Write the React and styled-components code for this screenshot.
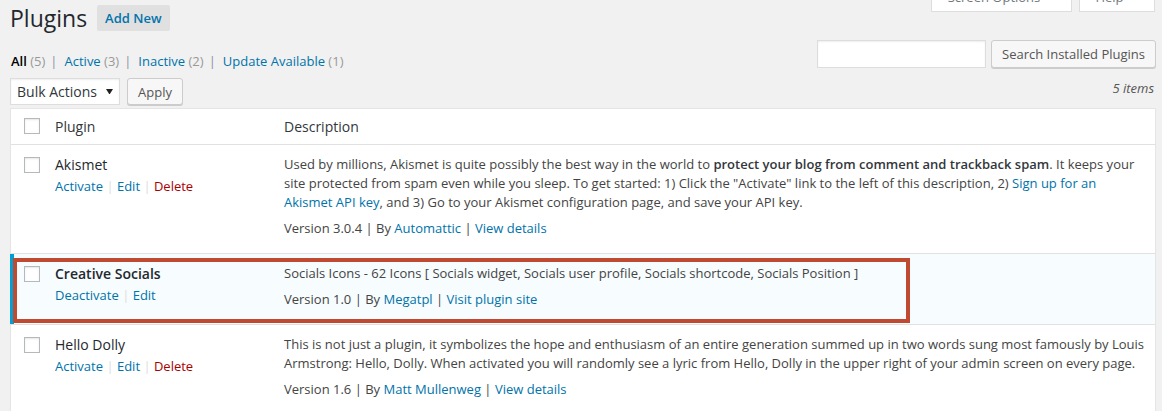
import styled, { createGlobalStyle } from 'styled-components';

const GlobalStyle = createGlobalStyle`
	html, body {
		margin: 0;
		padding: 0;
		background: #f1f1f1;
	}
	body {
		font-family: "Open Sans", "Liberation Sans", sans-serif;
		font-size: 13px;
		line-height: 19px;
		color: #444;
		overflow: hidden;
	}
	* {
		box-sizing: border-box;
	}
`;

const Wrap = styled.div`
	padding: 0 6px 0 10px;
`;

const TopBar = styled.div`
	display: flex;
	align-items: flex-start;
`;

const Title = styled.h1`
	margin: 4px 0 0;
	font-size: 23px;
	font-weight: 400;
	line-height: 29px;
	color: #23282d;
`;

const AddNew = styled.a`
	margin: 5px 0 0 10px;
	height: 26px;
	padding: 0 8px;
	display: inline-flex;
	align-items: center;
	background: #e0e0e0;
	border-radius: 2px;
	color: #0073aa;
	font-size: 13px;
	font-weight: 600;
	text-decoration: none;
`;

const MetaLinks = styled.div`
	margin: -16px 1px 0 auto;
	display: flex;
	gap: 7px;
`;

const MetaTab = styled.div`
	width: ${props => props.$width}px;
	height: 28px;
	background: #fff;
	border: 1px solid #ddd;
	border-top: 0;
	display: flex;
	align-items: center;
	justify-content: center;
	gap: 9px;
	color: #72777c;
	font-size: 13px;
`;

const SubRow = styled.div`
	display: flex;
	justify-content: space-between;
	align-items: flex-start;
	margin-top: 7px;
`;

const Filters = styled.ul`
	list-style: none;
	margin: 0;
	padding: 11px 0 0 1px;
	display: flex;
	font-size: 13px;
	line-height: 20px;
	color: #666;
	white-space: pre;
`;

const FilterLink = styled.a`
	color: ${props => (props.$current ? '#000' : '#0073aa')};
	font-weight: ${props => (props.$current ? 600 : 400)};
	text-decoration: none;
`;

const Count = styled.span`
	color: #999;
	font-weight: 400;
`;

const Sep = styled.span`
	margin: 0 7px 0 5px;
	color: ${props => props.$color || 'inherit'};
`;

const SearchBox = styled.div`
	display: flex;
	gap: 5px;
`;

const SearchInput = styled.input`
	width: 169px;
	height: 28px;
	margin: 0;
	border: 1px solid #ddd;
	background: #fff;
	box-shadow: inset 0 1px 2px rgba(0, 0, 0, 0.07);
	font-family: inherit;
`;

const Button = styled.button`
	height: ${props => props.$height || 28}px;
	margin: 0;
	padding: 0 10px;
	background: #f7f7f7;
	border: 1px solid #ccc;
	border-radius: 3px;
	box-shadow: 0 1px 0 #ccc;
	color: #555;
	font-family: inherit;
	font-size: 13px;
`;

const NavRow = styled.div`
	display: flex;
	align-items: flex-start;
	gap: 7px;
	margin-top: 7px;
`;

const SelectBox = styled.div`
	width: 110px;
	height: 27px;
	padding: 0 6px;
	display: flex;
	align-items: center;
	justify-content: space-between;
	background: #fff;
	border: 1px solid #ddd;
	box-shadow: inset 0 1px 2px rgba(0, 0, 0, 0.07);
	color: #32373c;
	font-size: 14px;
`;

const ItemCount = styled.span`
	margin: 0 2px 0 auto;
	line-height: 20px;
	font-style: italic;
	color: #555;
`;

const Table = styled.div`
	margin-top: 3px;
	background: #fff;
	border: 1px solid #e5e5e5;
	box-shadow: 0 1px 1px rgba(0, 0, 0, 0.04);
`;

const Row = styled.div`
	position: relative;
	display: grid;
	grid-template-columns: 34px 229px 1fr;
	border-top: ${props => (props.$head ? '0' : '1px solid #e1e1e1')};
	background: ${props => (props.$active ? '#f7fcfe' : '#fff')};

	${props =>
		props.$active &&
		`
		&::before {
			content: '';
			position: absolute;
			left: -1px;
			top: 0;
			bottom: 0;
			width: 4px;
			background: #00a0d2;
		}
	`}
`;

const CheckCell = styled.div`
	padding: ${props => (props.$head ? '9px' : '12px')} 0 0 13px;
`;

const Checkbox = styled.input.attrs({ type: 'checkbox' })`
	appearance: none;
	display: block;
	margin: 0;
	width: 16px;
	height: 16px;
	background: #fff;
	border: 1px solid #b4b9be;
	box-shadow: inset 0 1px 2px rgba(0, 0, 0, 0.1);
`;

const HeadCell = styled.div`
	padding: 8px 10px;
	font-size: 14px;
	color: #32373c;
`;

const Cell = styled.div`
	padding: 10px 10px 15px;
`;

const PluginName = styled.strong`
	display: block;
	margin-bottom: 3px;
	font-size: 14px;
	font-weight: ${props => (props.$active ? 600 : 400)};
	color: #23282d;
`;

const Actions = styled.div`
	color: #ddd;
	white-space: pre;
`;

const Link = styled.a`
	color: ${props => (props.$danger ? '#a00' : '#0073aa')};
	text-decoration: none;
`;

const Bold = styled.strong`
	font-weight: 600;
	color: #32373c;
`;

const Desc = styled.p`
	margin: 0 0 7px;
`;

const Version = styled.div`
	white-space: pre;
`;

const Highlight = styled.div`
	position: absolute;
	top: 4px;
	left: 2px;
	width: 897px;
	height: 65px;
	border: 4px solid #bf4a31;
	pointer-events: none;
`;

const Caret = ({ size = 7, color = 'currentColor' }) => (
	<svg width={size} height={size * 0.8} viewBox="0 0 10 8">
		<polygon points="0,0 10,0 5,8" fill={color} />
	</svg>
);

const plugins = [
	{
		name: 'Akismet',
		actions: [['Activate'], ['Edit'], ['Delete', true]],
		description: (
			<>
				Used by millions, Akismet is quite possibly the best way in the world to{' '}
				<Bold>protect your blog from comment and trackback spam</Bold>. It keeps your site protected from spam
				even while you sleep. To get started: 1) Click the "Activate" link to the left of this description, 2){' '}
				<Link>Sign up for an Akismet API key</Link>, and 3) Go to your Akismet configuration page, and save your
				API key.
			</>
		),
		version: '3.0.4',
		author: 'Automattic',
		site: 'View details',
	},
	{
		name: 'Creative Socials',
		active: true,
		actions: [['Deactivate'], ['Edit']],
		description:
			'Socials Icons - 62 Icons [ Socials widget, Socials user profile, Socials shortcode, Socials Position ]',
		version: '1.0',
		author: 'Megatpl',
		site: 'Visit plugin site',
	},
	{
		name: 'Hello Dolly',
		actions: [['Activate'], ['Edit'], ['Delete', true]],
		description:
			'This is not just a plugin, it symbolizes the hope and enthusiasm of an entire generation summed up in two words sung most famously by Louis Armstrong: Hello, Dolly. When activated you will randomly see a lyric from Hello, Dolly in the upper right of your admin screen on every page.',
		version: '1.6',
		author: 'Matt Mullenweg',
		site: 'View details',
	},
];

const filters = [
	['All', 5, true],
	['Active', 3],
	['Inactive', 2],
	['Update Available', 1],
];

const App = () => {
	return (
		<Wrap>
			<GlobalStyle />
			<TopBar>
				<Title>Plugins</Title>
				<AddNew href="#">Add New</AddNew>
				<MetaLinks>
					<MetaTab $width={141}>
						Screen Options <Caret size={6} color="#a0a5aa" />
					</MetaTab>
					<MetaTab $width={76}>
						Help <Caret size={6} color="#a0a5aa" />
					</MetaTab>
				</MetaLinks>
			</TopBar>

			<SubRow>
				<Filters>
					{filters.map(([label, count, current], i) => (
						<li key={label}>
							<FilterLink $current={current}>
								{label} <Count>({count})</Count>
							</FilterLink>
							{i < filters.length - 1 && <Sep $color="#8c8fa8">|</Sep>}
						</li>
					))}
				</Filters>
				<SearchBox>
					<SearchInput type="search" />
					<Button>Search Installed Plugins</Button>
				</SearchBox>
			</SubRow>

			<NavRow>
				<SelectBox>
					Bulk Actions <Caret size={7} color="#222" />
				</SelectBox>
				<Button $height={27}>Apply</Button>
				<ItemCount>5 items</ItemCount>
			</NavRow>

			<Table>
				<Row $head>
					<CheckCell $head>
						<Checkbox />
					</CheckCell>
					<HeadCell>Plugin</HeadCell>
					<HeadCell>Description</HeadCell>
				</Row>
				{plugins.map(plugin => (
					<Row key={plugin.name} $active={plugin.active}>
						<CheckCell>
							<Checkbox />
						</CheckCell>
						<Cell>
							<PluginName $active={plugin.active}>{plugin.name}</PluginName>
							<Actions>
								{plugin.actions.map(([label, danger], i) => (
									<span key={label}>
										{i > 0 ? ' | ' : ''}
										<Link $danger={danger}>{label}</Link>
									</span>
								))}
							</Actions>
						</Cell>
						<Cell>
							<Desc>{plugin.description}</Desc>
							<Version>
								Version {plugin.version} | By <Link>{plugin.author}</Link> | <Link>{plugin.site}</Link>
							</Version>
						</Cell>
						{plugin.active && <Highlight />}
					</Row>
				))}
			</Table>
		</Wrap>
	);
};

export default App;
